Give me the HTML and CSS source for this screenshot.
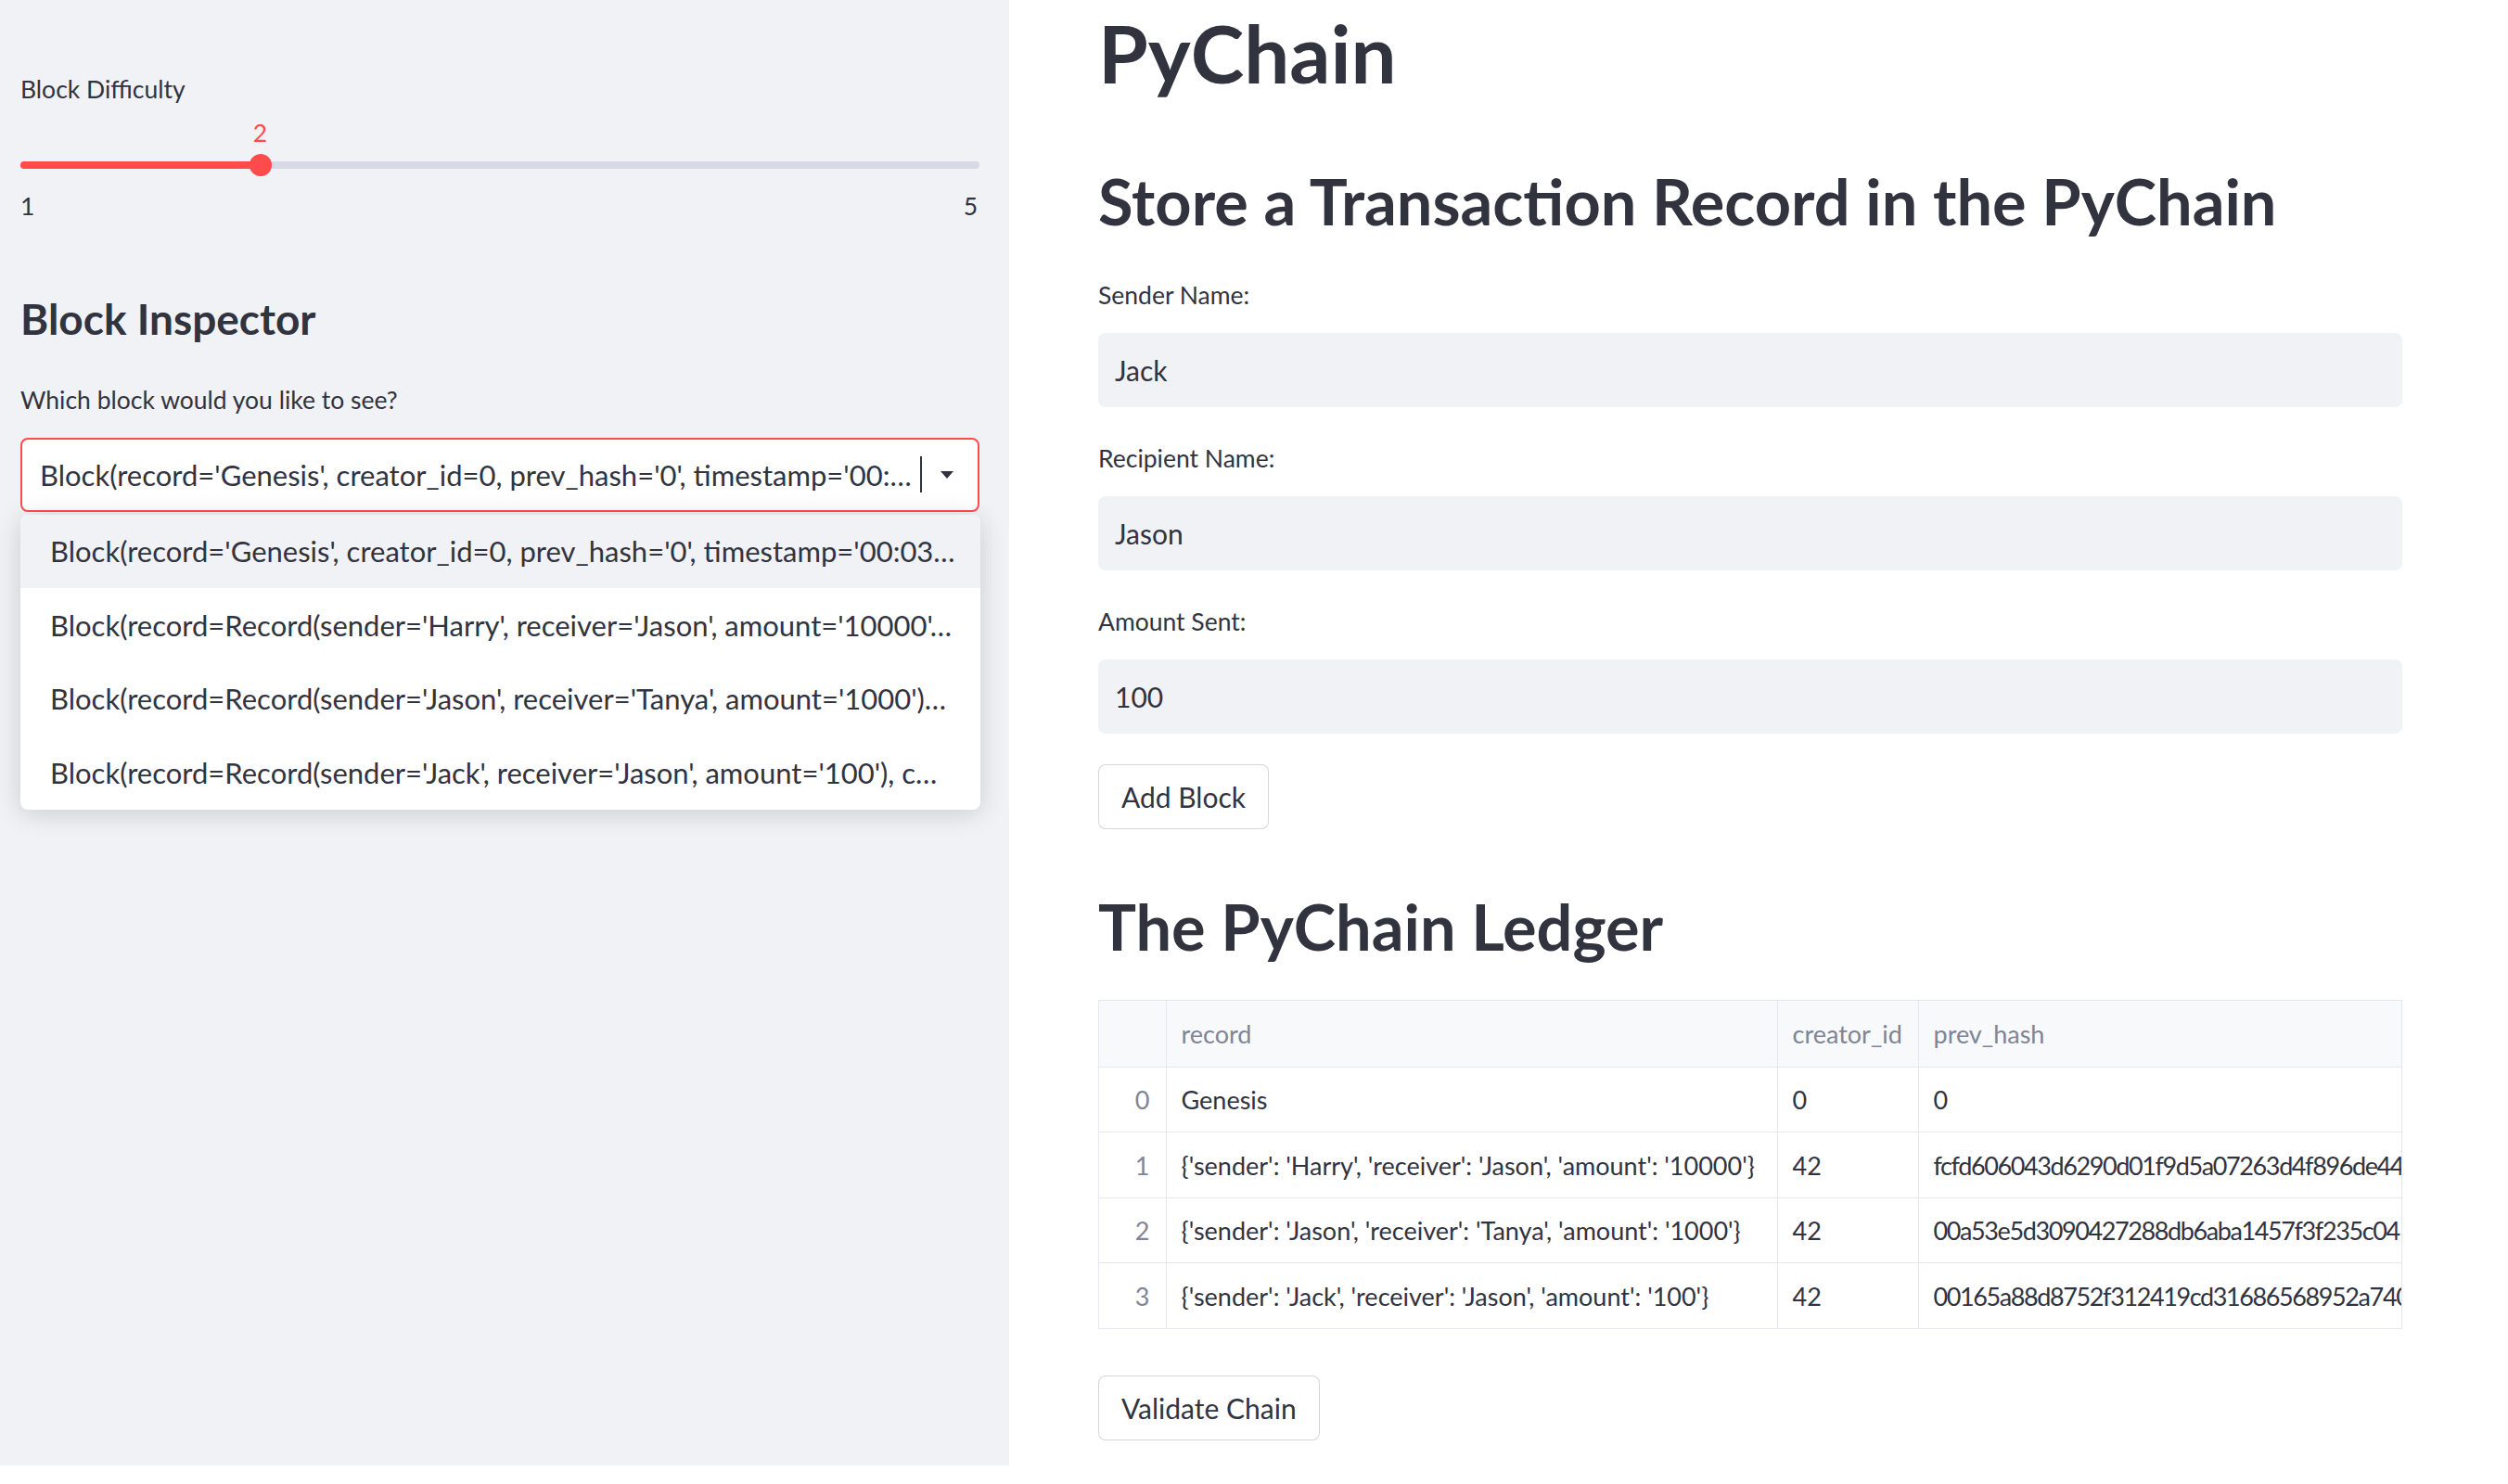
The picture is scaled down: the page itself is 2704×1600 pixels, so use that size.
FILE: index.html
```html
<!DOCTYPE html>
<html lang="en">
<head>
<meta charset="utf-8">
<title>PyChain</title>
<link rel="stylesheet" href="styles.css">
</head>
<body>
<div class="app">
  <aside class="sidebar">
    <div class="wlabel">Block Difficulty</div>
    <div class="slider">
      <div class="slider-value-row">
        <span class="slider-value" style="margin-left: calc(25% - 12px)">2</span>
      </div>
      <div class="track-row">
        <div class="track">
          <div class="fill" style="width: 25%"></div>
          <div class="thumb" style="left: 25%"></div>
        </div>
      </div>
      <div class="ticks"><span>1</span><span>5</span></div>
    </div>
    <h3 class="sb-heading">Block Inspector</h3>
    <div class="wlabel sb-label2">Which block would you like to see?</div>
    <div class="select-wrap">
      <div class="select">
        <span class="select-text">Block(record='Genesis', creator_id=0, prev_hash='0', timestamp='00:…</span>
        <span class="caret"></span>
        <svg class="arrow" width="14" height="8" viewBox="0 0 14 8"><path d="M0 0 H14 L7 8 Z" fill="#31333f"/></svg>
      </div>
      <ul class="menu">
        <li class="menu-item active">Block(record='Genesis', creator_id=0, prev_hash='0', timestamp='00:03…</li>
        <li class="menu-item">Block(record=Record(sender='Harry', receiver='Jason', amount='10000'…</li>
        <li class="menu-item">Block(record=Record(sender='Jason', receiver='Tanya', amount='1000')…</li>
        <li class="menu-item">Block(record=Record(sender='Jack', receiver='Jason', amount='100'), c…</li>
      </ul>
    </div>
  </aside>

  <main class="main">
    <div class="content">
      <h1 class="title">PyChain</h1>
      <h2 class="section">Store a Transaction Record in the PyChain</h2>

      <div class="field first">
        <div class="wlabel">Sender Name:</div>
        <div class="input">Jack</div>
      </div>
      <div class="field">
        <div class="wlabel">Recipient Name:</div>
        <div class="input">Jason</div>
      </div>
      <div class="field">
        <div class="wlabel">Amount Sent:</div>
        <div class="input">100</div>
      </div>
      <button class="btn btn-add">Add Block</button>

      <h2 class="section ledger">The PyChain Ledger</h2>

      <div class="grid-wrap">
        <table class="grid">
          <colgroup>
            <col class="c-idx"><col class="c-rec"><col class="c-cre"><col class="c-hash">
          </colgroup>
          <thead>
            <tr><th class="idx"></th><th>record</th><th>creator_id</th><th>prev_hash</th></tr>
          </thead>
          <tbody>
            <tr><td class="idx">0</td><td>Genesis</td><td>0</td><td>0</td></tr>
            <tr><td class="idx">1</td><td>{'sender': 'Harry', 'receiver': 'Jason', 'amount': '10000'}</td><td>42</td><td class="hash">fcfd606043d6290d01f9d5a07263d4f896de44</td></tr>
            <tr><td class="idx">2</td><td>{'sender': 'Jason', 'receiver': 'Tanya', 'amount': '1000'}</td><td>42</td><td class="hash">00a53e5d3090427288db6aba1457f3f235c04</td></tr>
            <tr><td class="idx">3</td><td>{'sender': 'Jack', 'receiver': 'Jason', 'amount': '100'}</td><td>42</td><td class="hash">00165a88d8752f312419cd31686568952a740</td></tr>
          </tbody>
        </table>
      </div>

      <button class="btn btn-validate">Validate Chain</button>
    </div>
  </main>
</div>
</body>
</html>
```

FILE: styles.css
```css
* { box-sizing: border-box; }

html, body {
  margin: 0;
  padding: 0;
  background: #ffffff;
}

body {
  width: 2704px;
  height: 1600px;
  overflow: hidden;
  font-family: Lato, "Liberation Sans", sans-serif;
  color: #31333f;
}

.app {
  display: flex;
  align-items: flex-start;
}

/* ---------- Sidebar ---------- */
.sidebar {
  flex: 0 0 1088px;
  width: 1088px;
  height: 1580px;
  background: #f0f2f6;
  padding: 75px 32px 0 22px;
}

.wlabel {
  font-size: 26.5px;
  line-height: 42px;
  white-space: nowrap;
}

.slider-value-row {
  height: 42px;
  margin-top: 5px;
}

.slider-value {
  display: inline-block;
  width: 24px;
  text-align: center;
  font-size: 26.5px;
  line-height: 42px;
  color: #ff4b4b;
}

.track-row {
  height: 24px;
  margin-top: 2px;
  display: flex;
  align-items: center;
}

.track {
  position: relative;
  width: 100%;
  height: 8px;
  border-radius: 4px;
  background: #d6dae4;
}

.fill {
  height: 100%;
  border-radius: 4px;
  background: #ff4b4b;
}

.thumb {
  position: absolute;
  top: 50%;
  width: 24px;
  height: 24px;
  margin: -12px 0 0 -12px;
  border-radius: 50%;
  background: #ff4b4b;
}

.ticks {
  margin-top: 11px;
  display: flex;
  justify-content: space-between;
  font-size: 26.5px;
  line-height: 42px;
  padding-right: 2px;
}

.sb-heading {
  margin: 72px 0 0;
  font-size: 46px;
  line-height: 57.6px;
  font-weight: 700;
}

.sb-label2 {
  margin-top: 37px;
}

.select-wrap {
  position: relative;
  margin-top: 20px;
}

.select {
  height: 80px;
  border: 2px solid #ff4b4b;
  border-radius: 8px;
  background: #ffffff;
  display: flex;
  align-items: center;
  padding: 0 26px 0 19px;
}

.select-text {
  flex: 0 1 auto;
  font-size: 31px;
  white-space: nowrap;
  overflow: hidden;
  text-overflow: ellipsis;
}

.caret {
  flex: 0 0 2px;
  width: 2px;
  height: 39px;
  margin-left: 9px;
  background: #31333f;
}

.arrow {
  margin-left: auto;
  flex: 0 0 auto;
}

.menu {
  position: absolute;
  top: calc(100% + 3px);
  left: 0;
  right: -1px;
  margin: 0;
  padding: 0;
  list-style: none;
  background: #ffffff;
  border-radius: 8px;
  overflow: hidden;
  box-shadow: 0 4px 28px rgba(0, 0, 0, 0.16);
}

.menu-item {
  height: 79.5px;
  display: flex;
  align-items: center;
  padding-left: 32px;
  font-size: 31px;
  white-space: nowrap;
  overflow: hidden;
}

.menu-item.active {
  background: #f0f2f6;
}

/* ---------- Main ---------- */
.main {
  flex: 1 1 auto;
  padding: 4px 0 0 96px;
}

.content {
  width: 1406px;
  display: flex;
  flex-direction: column;
  align-items: stretch;
}

.title {
  margin: 0;
  font-size: 87px;
  line-height: 105.6px;
  font-weight: 700;
}

.section {
  margin: 64px 0 0;
  font-size: 68.5px;
  line-height: 86.4px;
  font-weight: 700;
}

.field {
  margin-top: 34px;
}

.field.first {
  margin-top: 37px;
}

.field .wlabel {
  margin-bottom: 20px;
}

.input {
  height: 80px;
  border-radius: 8px;
  background: #f0f2f6;
  display: flex;
  align-items: center;
  padding-left: 18px;
  font-size: 30px;
}

.btn {
  align-self: flex-start;
  height: 70px;
  padding: 0 24px;
  border: 1px solid rgba(49, 51, 63, 0.2);
  border-radius: 8px;
  background: #ffffff;
  font-family: inherit;
  font-size: 30px;
  color: #31333f;
}

.btn-add {
  margin-top: 33px;
}

.section.ledger {
  margin-top: 62px;
}

.grid-wrap {
  margin-top: 36px;
  width: 1406px;
  overflow: hidden;
  border: 1px solid #e4e7ed;
}

.grid {
  table-layout: fixed;
  border-collapse: collapse;
  width: 1800px;
  font-size: 27px;
}

.c-idx { width: 72px; }
.c-rec { width: 659px; }
.c-cre { width: 152px; }
.c-hash { width: 917px; }

.grid th,
.grid td {
  border: 1px solid #e4e7ed;
  padding: 0 16px;
  text-align: left;
  white-space: nowrap;
  overflow: hidden;
  font-weight: 400;
}

.grid thead tr { height: 71px; }
.grid tbody tr { height: 70.5px; }

.grid tr:first-child th { border-top: none; }
.grid th:first-child,
.grid td:first-child { border-left: none; }
.grid tbody tr:last-child td { border-bottom: none; }

.grid th {
  background: #f8f9fb;
  color: #808495;
}

.grid .idx {
  text-align: right;
  color: #808495;
  padding-right: 17px;
}

.grid .hash {
  letter-spacing: -1.4px;
}

.btn-validate {
  margin-top: 50px;
}
```
